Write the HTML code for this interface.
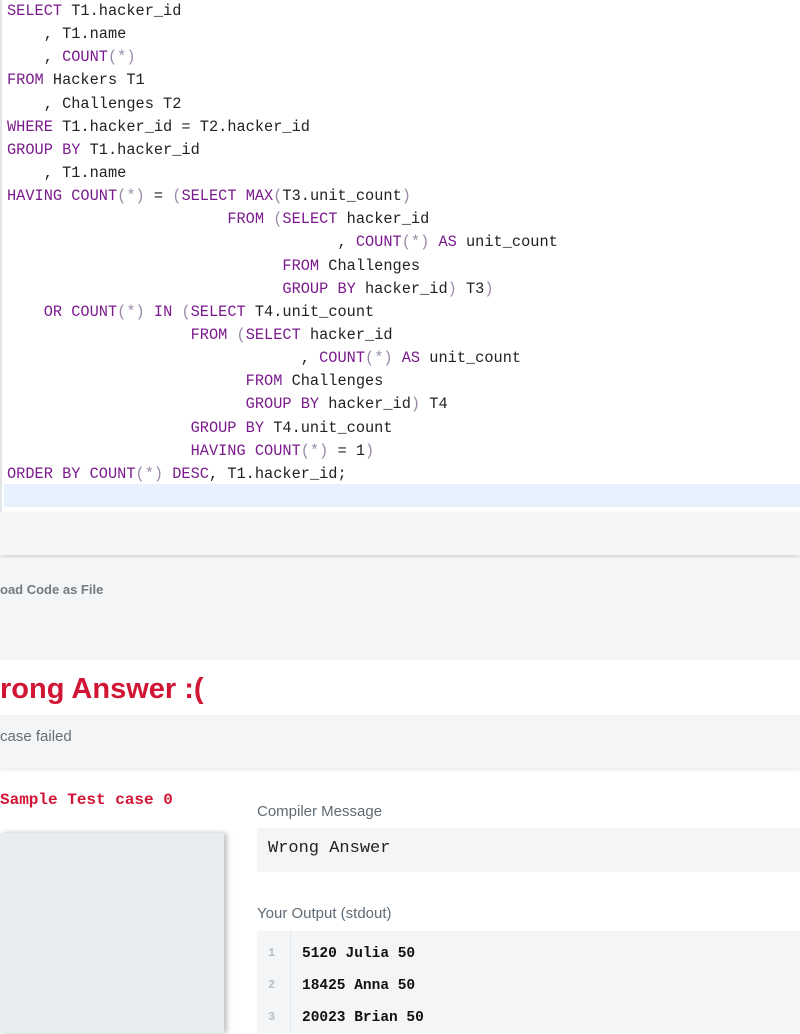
<!DOCTYPE html>
<html><head><style>
*{margin:0;padding:0;box-sizing:border-box}
body{width:800px;height:1033px;overflow:hidden;background:#fff;font-family:"Liberation Sans",sans-serif;position:relative}
.ed{position:absolute;left:0;top:0;width:800px;height:512px;background:#fff;border-left:2px solid #e3e6e8}
.code{position:absolute;left:5px;top:0;font-family:"Liberation Mono",monospace;font-size:15.3px;color:#222}
.code div{height:23.15px;line-height:23.15px;white-space:pre}
.k{color:#7a1a8c}.p{color:#9a88a8}
.hl{position:absolute;left:2px;top:484px;width:798px;height:23px;background:#e8f2fe}
.abs{position:absolute}
</style></head><body>
<div class="ed"><div class="hl"></div>
<div class="code">
<div><span class="k">SELECT</span> T1.hacker_id</div>
<div>    , T1.name</div>
<div>    , <span class="k">COUNT</span><span class="p">(*)</span></div>
<div><span class="k">FROM</span> Hackers T1</div>
<div>    , Challenges T2</div>
<div><span class="k">WHERE</span> T1.hacker_id = T2.hacker_id</div>
<div><span class="k">GROUP BY</span> T1.hacker_id</div>
<div>    , T1.name</div>
<div><span class="k">HAVING COUNT</span><span class="p">(*)</span> = <span class="p">(</span><span class="k">SELECT MAX</span><span class="p">(</span>T3.unit_count<span class="p">)</span></div>
<div>                        <span class="k">FROM</span> <span class="p">(</span><span class="k">SELECT</span> hacker_id</div>
<div>                                    , <span class="k">COUNT</span><span class="p">(*)</span> <span class="k">AS</span> unit_count</div>
<div>                              <span class="k">FROM</span> Challenges</div>
<div>                              <span class="k">GROUP BY</span> hacker_id<span class="p">)</span> T3<span class="p">)</span></div>
<div>    <span class="k">OR COUNT</span><span class="p">(*)</span> <span class="k">IN</span> <span class="p">(</span><span class="k">SELECT</span> T4.unit_count</div>
<div>                    <span class="k">FROM</span> <span class="p">(</span><span class="k">SELECT</span> hacker_id</div>
<div>                                , <span class="k">COUNT</span><span class="p">(*)</span> <span class="k">AS</span> unit_count</div>
<div>                          <span class="k">FROM</span> Challenges</div>
<div>                          <span class="k">GROUP BY</span> hacker_id<span class="p">)</span> T4</div>
<div>                    <span class="k">GROUP BY</span> T4.unit_count</div>
<div>                    <span class="k">HAVING COUNT</span><span class="p">(*)</span> = 1<span class="p">)</span></div>
<div><span class="k">ORDER BY COUNT</span><span class="p">(*)</span> <span class="k">DESC</span>, T1.hacker_id;</div>
</div></div>
<div class="abs" style="left:0;top:512px;width:800px;height:43px;background:#f3f5f6;box-shadow:0 4px 6px rgba(0,0,0,0.15)"></div>
<div class="abs" style="left:0;top:558px;width:800px;height:102px;background:#f3f5f6"></div>
<div class="abs" style="left:0;top:582px;font-size:13px;font-weight:bold;color:#737a80">oad Code as File</div>
<div class="abs" style="left:0;top:670px;font-size:29px;font-weight:bold;color:#d11534;line-height:38px">rong Answer :(</div>
<div class="abs" style="left:0;top:715px;width:800px;height:53px;background:#f3f5f6;box-shadow:0 2px 3px rgba(0,0,0,0.08)"></div>
<div class="abs" style="left:0;top:728px;font-size:15px;color:#666e75">case failed</div>
<div class="abs" style="left:0;top:791px;font-family:'Liberation Mono',monospace;font-size:16px;font-weight:bold;color:#d11534">Sample Test case 0</div>
<div class="abs" style="left:0;top:833px;width:224px;height:200px;background:#e7ecee;box-shadow:3px 0 5px rgba(0,0,0,0.25)"></div>
<div class="abs" style="left:257px;top:803px;font-size:15px;color:#5f6b75">Compiler Message</div>
<div class="abs" style="left:257px;top:828px;width:543px;height:44px;background:#f3f5f6"></div>
<div class="abs" style="left:268px;top:839px;font-family:'Liberation Mono',monospace;font-size:17px;color:#222">Wrong Answer</div>
<div class="abs" style="left:257px;top:905px;font-size:15px;color:#5f6b75">Your Output (stdout)</div>
<div class="abs" style="left:257px;top:931px;width:543px;height:102px;background:#f3f5f6"></div>
<div class="abs" style="left:290px;top:931px;width:1px;height:102px;background:#e3e7ea"></div>
<div class="abs" style="left:268px;top:937px;font-family:'Liberation Mono',monospace;font-size:12px;font-weight:bold;color:#b8bec2;line-height:32px">1<br>2<br>3</div>
<div class="abs" style="left:302px;top:938px;font-family:'Liberation Mono',monospace;font-size:14.5px;font-weight:bold;color:#111;line-height:32px">5120 Julia 50<br>18425 Anna 50<br>20023 Brian 50</div>
</body></html>
